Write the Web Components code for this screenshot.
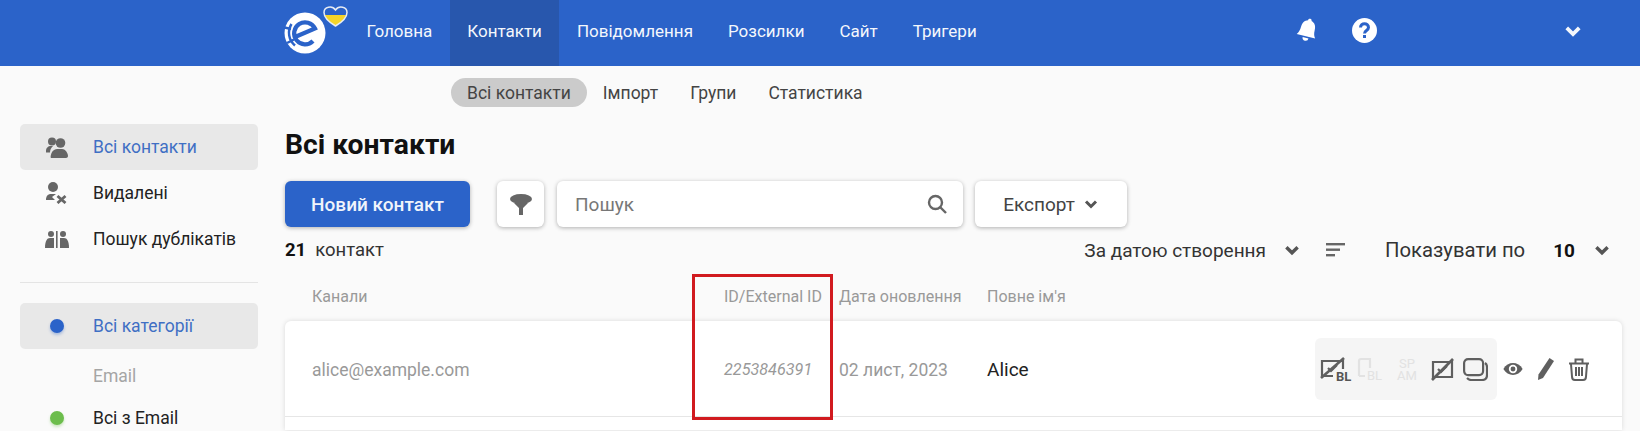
<!DOCTYPE html>
<html lang="uk">
<head>
<meta charset="utf-8">
<title>Контакти</title>
<style>
	html, body { margin: 0; height: 431px; overflow: hidden; }
	body { background: #fafafa; color: #222; font: 16px Roboto, "Liberation Sans", sans-serif; }
</style>
</head>
<body>
<app-header></app-header>
<app-shell>
	<side-menu slot="side"></side-menu>
	<contacts-page slot="main"></contacts-page>
</app-shell>

<script>
const chevron = (size, color) => `<svg width="${size}" height="${size}" viewBox="0 0 16 16"><path d="M3 5.500l5 5 5-5" fill="none" stroke="${color}" stroke-width="3" stroke-linejoin="miter"/></svg>`;

class AppHeader extends HTMLElement {
	constructor() {
		super();
		this.attachShadow({ mode: 'open' });
		this.shadowRoot.innerHTML = `
			<style>
				:host { display: flex; height: 66px; background: #2b63c9; color: #f4f7fc; padding-left: 283px; box-sizing: border-box; font-size: 17px; }
				.logo { width: 66px; height: 66px; flex: none; }
				nav { display: flex; }
				a { display: flex; align-items: center; padding: 0 17.500px 4px; }
				a.on { background: #2857ad; }
				.tools { display: flex; align-items: center; margin-left: 302px; padding-bottom: 5px; }
				.help { margin-left: 33px; }
				.down { margin-left: 186px; display: flex; }
			</style>
			<svg class="logo" viewBox="0 0 66 66">
				<defs>
					<linearGradient id="flag" x1="0" y1="0" x2="0" y2="1">
						<stop offset="0.400" stop-color="#2b63c9"/><stop offset="0.400" stop-color="#f5d428"/>
					</linearGradient>
				</defs>
				<circle cx="22" cy="33" r="20.500" fill="#fff"/>
				<path d="M8.500 24A16.500 16.500 0 0 0 12 45.500" fill="none" stroke="#2b63c9" stroke-width="2.500"/>
				<path d="M1.500 27.500L8 29M4 43l7-3.500" fill="none" stroke="#2b63c9" stroke-width="2.500"/>
				<path d="M12 37L32 28.500A11 11 0 1 0 30 41" fill="none" stroke="#2b63c9" stroke-width="4.200"/>
				<path d="M52.500 26C44 21 41 16 41 12.500 41 7 49 5 52.500 10 56 5 64 7 64 12.500 64 16 61 21 52.500 26z" fill="url(#flag)" stroke="#e6ebf4" stroke-width="1.500"/>
			</svg>
			<nav>
				<a>Головна</a><a class="on">Контакти</a><a>Повідомлення</a><a>Розсилки</a><a>Сайт</a><a>Тригери</a>
			</nav>
			<div class="tools">
				<svg width="23" height="27" viewBox="0 0 23 27"><g transform="rotate(14 11.500 13)" fill="#fff"><path d="M11.500 1.500c1 0 1.800.8 1.800 1.800 3.500 1 5.200 4 5.200 7.700 0 4.500 1 6.500 2.500 8.500H2c1.500-2 2.500-4 2.500-8.500 0-3.700 1.700-6.700 5.200-7.700 0-1 .8-1.800 1.800-1.800z"/><path d="M8.500 21h6a3 3 0 0 1-6 0z"/></g></svg>
				<svg class="help" width="25" height="25" viewBox="0 0 25 25"><circle cx="12.500" cy="12.500" r="12.500" fill="#fff"/><path d="M8.500 9.500c0-5 8-5 8 0 0 3-4 3-4 6" fill="none" stroke="#2b63c9" stroke-width="3"/><rect x="11" y="17" width="3" height="3" fill="#2b63c9"/></svg>
				<span class="down">${chevron(20, '#f4f7fc')}</span>
			</div>`;
	}
}
customElements.define('app-header', AppHeader);

class AppShell extends HTMLElement {
	constructor() {
		super();
		this.attachShadow({ mode: 'open' });
		this.shadowRoot.innerHTML = `
			<style>
				:host { display: grid; grid-template-columns: 285px 1fr; }
			</style>
			<slot name="side"></slot>
			<slot name="main"></slot>`;
	}
}
customElements.define('app-shell', AppShell);

class SideItem extends HTMLElement {
	constructor() {
		super();
		this.attachShadow({ mode: 'open' });
		this.shadowRoot.innerHTML = `
			<style>
				:host { display: flex; align-items: center; height: 46px; border-radius: 5px; color: #222; font-size: 17.500px; }
				:host([active]) { background: #e8e8e8; color: #3f6fc4; }
				:host([muted]) { color: #a5a5a5; }
				.ic { width: 73px; flex: none; display: flex; justify-content: center; }
			</style>
			<div class="ic"><slot name="icon"></slot></div>
			<slot></slot>`;
	}
}
customElements.define('side-item', SideItem);

class SideMenu extends HTMLElement {
	constructor() {
		super();
		this.attachShadow({ mode: 'open' });
		this.shadowRoot.innerHTML = `
			<style>
				:host { display: block; padding: 58px 27px 0 20px; }
				hr { border: 0; border-top: 1px solid #e4e4e4; margin: 20px 0; }
				.dot { display: block; width: 14px; height: 14px; border-radius: 50%; }
				svg { display: block; }
				.email { margin-top: 4px; }
				.last { height: 26px; margin-top: 6px; }
			</style>
			<side-item active>
				<svg slot="icon" width="22" height="21" viewBox="0 0 22 21" fill="#666"><circle cx="6" cy="4.500" r="4"/><circle cx="14.500" cy="6" r="4.800"/><path d="M0 14c0-3 2-5 5-5h2c-2 2-3 4-3 6.500H0zM5 21c-1 0 0-9 6-9h5c4 0 6 5 6 7 0 1-1 2-2 2z"/></svg>
				Всі контакти
			</side-item>
			<side-item>
				<svg slot="icon" width="21" height="22" viewBox="0 0 21 22" fill="#666"><circle cx="7" cy="5" r="5"/><path d="M0 18c0-4 2-6 5-6h5l-4 3 3 3z"/><path d="M11.500 14l8 7M19.500 14l-8 7" stroke="#666" stroke-width="2.800"/></svg>
				Видалені
			</side-item>
			<side-item>
				<svg slot="icon" width="24" height="17" viewBox="0 0 24 17" fill="#666"><circle cx="6" cy="3" r="3"/><path d="M0 17c0-7 2-10 5-10h4v10z"/><rect x="11" y="0" width="1.600" height="17"/><circle cx="18" cy="3" r="3"/><path d="M15 7h4c3 0 5 3 5 10h-9z"/></svg>
				Пошук дублікатів
			</side-item>
			<hr>
			<side-item active><i slot="icon" class="dot" style="background:#2b63c9;box-shadow:0 2px 3px #2b63c955"></i>Всі категорії</side-item>
			<side-item muted class="email">Email</side-item>
			<side-item class="last"><i slot="icon" class="dot" style="background:#6cbd4c;box-shadow:0 2px 3px #6cbd4c55"></i>Всі з Email</side-item>`;
	}
}
customElements.define('side-menu', SideMenu);

class ContactsPage extends HTMLElement {
	constructor() {
		super();
		this.attachShadow({ mode: 'open' });
		this.shadowRoot.innerHTML = `
			<style>
				:host { display: block; padding-right: 18px; position: relative; }
				.tabs { display: flex; height: 41px; padding: 12px 0 0 166px; box-sizing: border-box; color: #444; font-size: 17.500px; }
				.tabs a { display: flex; align-items: center; height: 29px; padding: 0 16px; border-radius: 15px; }
				.tabs a.on { background: #cbcbcb; }
				h1 { margin: 22px 0 20px; font-size: 28.300px; line-height: 32px; font-weight: 700; color: #111; }
				.bar { display: flex; align-items: stretch; height: 46px; font-size: 19px; }
				.box { background: #fff; border-radius: 6px; box-shadow: 0 1px 4px #0000004d; display: flex; align-items: center; box-sizing: border-box; }
				.new { width: 185px; background: #2b63c9; color: #f0f4fb; justify-content: center; font-weight: 500; margin-right: 27px; }
				.filter { width: 47px; justify-content: center; margin-right: 13px; }
				.search { width: 406px; padding: 0 16px 0 18px; justify-content: space-between; margin-right: 12px; color: #777; }
				.export { width: 152px; justify-content: center; gap: 8px; color: #444; }
				.info { display: flex; align-items: center; height: 22px; margin-top: 12px; color: #333; font-size: 18.500px; }
				.info b { color: #111; margin-right: 9px; }
				.sort { margin-left: auto; margin-right: 11px; display: flex; align-items: center; font-size: 19px; }
				.sort span { display: flex; }
				.heads, .row { display: grid; grid-template-columns: 412px 115px 148px 1fr; padding-left: 27px; align-items: center; }
				.heads { height: 49px; margin-top: 11px; color: #999; font-size: 16px; }
				.card { background: #fff; border-radius: 6px 6px 0 0; box-shadow: 0 0 5px #00000022; }
				.row { height: 96px; padding-top: 2px; box-sizing: border-box; border-bottom: 1px solid #e6e6e6; color: #999; position: relative; font-size: 17.500px; }
				.row.next { height: 13px; padding: 0; border: 0; }
				.row i { font-size: 16.200px; }
				.name { color: #222; font-size: 19px; }
				.acts { position: absolute; left: 1030px; top: 17px; display: flex; align-items: center; }
				.grey { display: flex; align-items: center; width: 182px; height: 62px; background: #f5f5f5; border-radius: 6px; padding-left: 5px; box-sizing: border-box; }
				svg { display: block; flex: none; }
				.red { position: absolute; left: 407px; top: 208px; width: 135px; height: 140px; border: 3px solid #d11a1f; pointer-events: none; }
			</style>
			<div class="tabs"><a class="on">Всі контакти</a><a>Імпорт</a><a>Групи</a><a>Статистика</a></div>
			<h1>Всі контакти</h1>
			<div class="bar">
				<div class="box new">Новий контакт</div>
				<div class="box filter"><svg width="22" height="21" viewBox="0 0 22 21" fill="#666"><ellipse cx="11" cy="5" rx="11" ry="5"/><path d="M4 9h14l-5 5v7H9v-7z"/></svg></div>
				<div class="box search">Пошук<svg width="20" height="20" viewBox="0 0 20 20" fill="none" stroke="#666" stroke-width="2.400"><circle cx="8.500" cy="8.500" r="6.500"/><path d="M13 13l6 6"/></svg></div>
				<div class="box export">Експорт ${chevron(16, '#555')}</div>
			</div>
			<div class="info">
				<b>21</b> контакт
				<div class="sort">
					За датою створення
					<span style="margin-left:17px">${chevron(18, '#555')}</span>
					<svg style="margin-left:25px" width="19" height="16" viewBox="0 0 19 16" fill="#666"><rect width="19" height="2.400" y="1"/><rect width="14" height="2.400" y="6.500"/><rect width="9" height="2.400" y="12"/></svg>
					<span style="margin-left:40px;font-size:20.300px">Показувати по</span>
					<b style="margin:0 0 0 28px">10</b>
					<span style="margin-left:18px">${chevron(18, '#555')}</span>
				</div>
			</div>
			<div class="heads"><span>Канали</span><span>ID/External ID</span><span>Дата оновлення</span><span>Повне ім'я</span></div>
			<div class="card">
				<div class="row">
					<span>alice@example.com</span>
					<i>2253846391</i>
					<span>02 лист, 2023</span>
					<span class="name">Alice</span>
					<div class="acts">
						<div class="grey">
							<svg width="36" height="34" viewBox="0 -4 36 34" fill="none" stroke="#5f5f5f" stroke-width="2.200"><path d="M2 20V5h21v8M2 20h11"/><path d="M8 12l3 3 6-6"/><path d="M1 22L24 2" stroke-width="2.600"/><text x="16" y="25" fill="#555" stroke="none" font-size="13" font-weight="700" font-family="Roboto">BL</text></svg>
							<svg style="margin-left:1px" width="30" height="34" viewBox="0 -4 30 34" fill="none" stroke="#e2e2e2" stroke-width="2.200"><path d="M2 20V5c0-1 1-2 2-2h9v9M2 20h6"/><text x="10" y="24" fill="#e2e2e2" stroke="none" font-size="13" font-family="Roboto">BL</text></svg>
							<svg style="margin-left:8px" width="24" height="34" viewBox="-1 -4 24 34"><text x="11" y="12" text-anchor="middle" fill="#e2e2e2" font-size="13" font-family="Roboto">SP</text><text x="11" y="24" text-anchor="middle" fill="#e2e2e2" font-size="13" font-family="Roboto">AM</text></svg>
							<svg style="margin-left:12px" width="23" height="24" viewBox="0 0 23 24" fill="none" stroke="#5f5f5f" stroke-width="2.200"><path d="M2 5h19v15H2z"/><path d="M7 12l3 3 6-6"/><path d="M1 23L22 2" stroke-width="2.600"/></svg>
							<svg style="margin-left:9px" width="25" height="23" viewBox="0 0 25 23" fill="none" stroke="#5f5f5f" stroke-width="2.200"><rect x="1.100" y="1.100" width="19" height="16" rx="4"/><path d="M22 5c1.500 1 2 2 2 4v8c0 3-2 5-5 5H8c-2 0-3-1-4-2"/></svg>
						</div>
						<svg style="margin-left:5px" width="22" height="14" viewBox="0 0 24 16"><path d="M1 8c5-9 17-9 22 0-5 9-17 9-22 0z" fill="#5f5f5f"/><circle cx="12" cy="8" r="4.800" fill="#fff"/><circle cx="12" cy="8" r="2.800" fill="#5f5f5f"/></svg>
						<svg style="margin-left:14px" width="16" height="22" viewBox="0 0 16 22" fill="#5f5f5f"><path d="M11.500 0L16 3 5 20l-5 2 .5-5.500z"/></svg>
						<svg style="margin-left:15px" width="20" height="23" viewBox="0 0 20 23" fill="none" stroke="#5f5f5f" stroke-width="2"><path d="M0 5.500h20M6.500 5V1.500h7V5M2 6l1 12.500c0 2 1 3.500 3 3.500h8c2 0 3-1.500 3-3.500L18 6M7 9v9M13 9v9M10 9v9"/></svg>
					</div>
				</div>
				<div class="row next"></div>
			</div>
			<div class="red"></div>`;
	}
}
customElements.define('contacts-page', ContactsPage);
</script>
</body>
</html>
